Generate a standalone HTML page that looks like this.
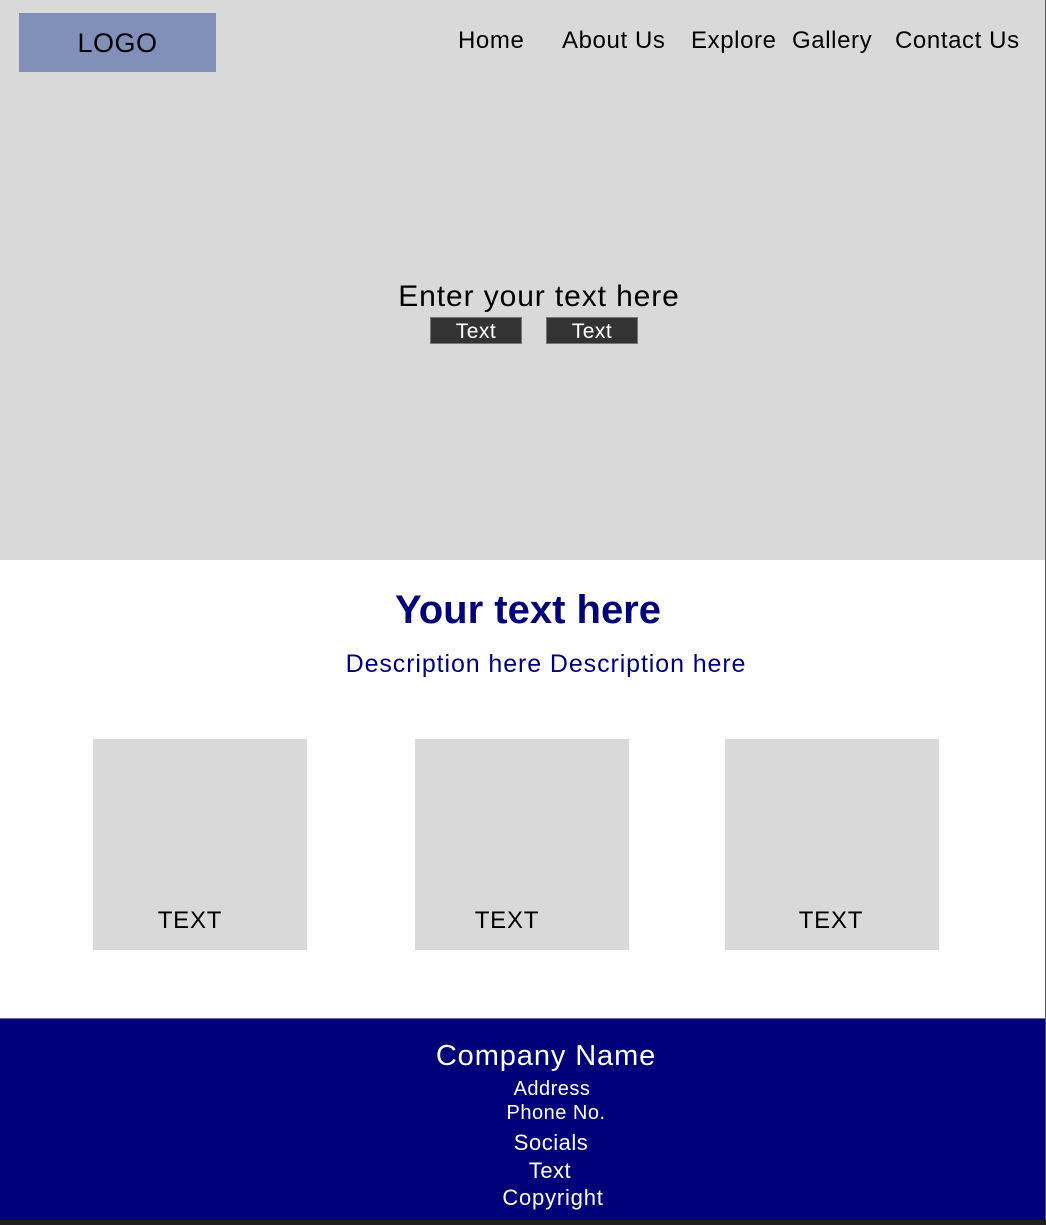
<!DOCTYPE html>
<html><head><meta charset="utf-8"><style>
*{margin:0;padding:0;box-sizing:border-box}
body{width:1046px;height:1225px;position:relative;overflow:hidden;background:#fff;font-family:"Liberation Sans",sans-serif}
.a{position:absolute;white-space:nowrap}
.hero{left:0;top:0;width:1045px;height:560px;background:#d9d9d9}
.logo{left:19px;top:13px;width:197px;height:59px;background:#8090b8;font-size:27px;line-height:61px;text-align:center;color:#000;letter-spacing:0.5px}
.nav{top:27px;font-size:24px;color:#000;letter-spacing:0.6px}
.btn{top:317px;width:92px;height:27px;background:#333;border:1px solid #777;color:#fff;font-size:21px;line-height:27px;text-align:center;letter-spacing:0.5px}
.card{top:739px;width:214px;height:211px;background:#d9d9d9}
.ct{font-size:24px;color:#000;top:907px;width:214px;text-align:center;letter-spacing:0.8px}
.foot{left:0;top:1018px;width:1045px;height:202px;background:#000078;border-top:1px solid #6a6aa8}
.f{color:#fff;left:0;text-align:center;letter-spacing:0.5px}
</style></head><body>
<div class="a hero"></div>
<div class="a" style="left:1045px;top:0;width:1px;height:1225px;background:#555"></div>
<div class="a logo">LOGO</div>
<div class="a nav" style="left:458px">Home</div>
<div class="a nav" style="left:562px">About Us</div>
<div class="a nav" style="left:691px">Explore</div>
<div class="a nav" style="left:792px">Gallery</div>
<div class="a nav" style="left:895px">Contact Us</div>
<div class="a" style="left:0;width:1078px;text-align:center;top:280px;font-size:30px;color:#000;letter-spacing:0.9px">Enter your text here</div>
<div class="a btn" style="left:430px">Text</div>
<div class="a btn" style="left:546px">Text</div>
<div class="a" style="left:0;width:1056px;text-align:center;top:588px;font-size:40px;font-weight:bold;color:#000078">Your text here</div>
<div class="a" style="left:0;width:1092px;text-align:center;top:650px;font-size:25px;color:#000078;letter-spacing:0.9px">Description here Description here</div>
<div class="a card" style="left:93px"></div>
<div class="a card" style="left:415px"></div>
<div class="a card" style="left:725px"></div>
<div class="a ct" style="left:83px">TEXT</div>
<div class="a ct" style="left:400px">TEXT</div>
<div class="a ct" style="left:724px">TEXT</div>
<div class="a foot"></div>
<div class="a" style="left:0;top:1220px;width:1046px;height:5px;background:#1e1e1e"></div>
<div class="a f" style="top:1040px;font-size:29px;width:1092px;letter-spacing:0.9px">Company Name</div>
<div class="a f" style="top:1078px;font-size:20px;width:1104px">Address</div>
<div class="a f" style="top:1102px;font-size:20px;width:1112px">Phone No.</div>
<div class="a f" style="top:1130px;font-size:22px;width:1102px">Socials</div>
<div class="a f" style="top:1158px;font-size:22px;width:1100px">Text</div>
<div class="a f" style="top:1185px;font-size:22px;width:1106px;letter-spacing:0.8px">Copyright</div>
</body></html>
